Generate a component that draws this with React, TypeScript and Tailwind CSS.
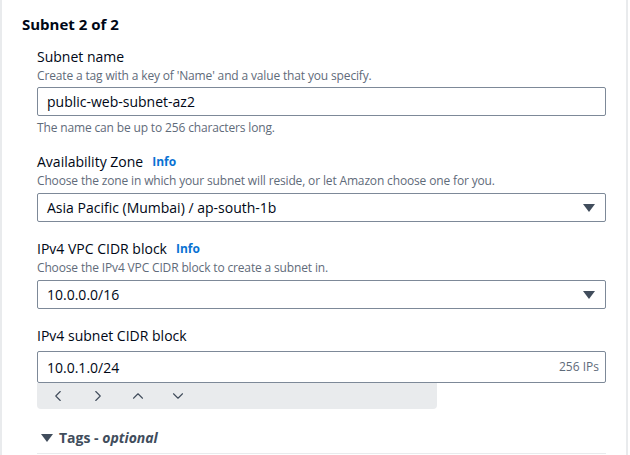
import { ChevronLeft, ChevronRight, ChevronUp, ChevronDown } from 'lucide-react'

const font = { fontFamily: '"Open Sans", "Noto Sans", Arial, sans-serif' }

function Caret() {
  return (
    <svg width="12" height="10" viewBox="0 0 12 10" className="shrink-0">
      <path d="M0 1h12L6 9z" fill="#414d5c" />
    </svg>
  )
}

function Label({ text, info }: { text: string; info?: boolean }) {
  return (
    <div className="flex items-center gap-[9px] text-[14px] leading-[20px] text-[#000716]">
      <span>{text}</span>
      {info && <span className="text-[12px] font-bold text-[#0972d3]">Info</span>}
    </div>
  )
}

function Desc({ text }: { text: string }) {
  return <div className="text-[12px] leading-[18px] tracking-[-0.15px] text-[#5f6b7a]">{text}</div>
}

function Select({ value }: { value: string }) {
  return (
    <div className="mt-[3px] flex h-[29px] items-center justify-between rounded-[2px] border border-[#7d8998] pl-[9px] pr-[10px] text-[14px] text-[#000716]">
      <span>{value}</span>
      <Caret />
    </div>
  )
}

export default function App() {
  return (
    <div style={font} className="h-[455px] w-[630px] overflow-hidden bg-white">
      <div className="h-full border-l-2 border-r-2 border-[#e9ebed] mr-[2px]">
        <div className="pl-[20px] pt-[13px] text-[15px] font-bold leading-[22px] text-[#000716]">Subnet 2 of 2</div>
        <div className="ml-[35px] mr-[20px] mt-[12px]">
          <Label text="Subnet name" />
          <Desc text="Create a tag with a key of 'Name' and a value that you specify." />
          <div className="mt-[2px] flex h-[29px] items-center rounded-[2px] border border-[#7d8998] pl-[9px] text-[14px] text-[#000716]">
            public-web-subnet-az2
          </div>
          <div className="mt-[3px]"><Desc text="The name can be up to 256 characters long." /></div>

          <div className="mt-[15px]">
            <Label text="Availability Zone" info />
            <Desc text="Choose the zone in which your subnet will reside, or let Amazon choose one for you." />
            <Select value="Asia Pacific (Mumbai) / ap-south-1b" />
          </div>

          <div className="mt-[17px]">
            <Label text="IPv4 VPC CIDR block" info />
            <Desc text="Choose the IPv4 VPC CIDR block to create a subnet in." />
            <Select value="10.0.0.0/16" />
          </div>

          <div className="mt-[17px]">
            <Label text="IPv4 subnet CIDR block" />
            <div className="mt-[5px] flex h-[32px] items-center justify-between rounded-[2px] border border-[#7d8998] pl-[9px] pr-[6px] text-[14px] text-[#000716]">
              <span>10.0.1.0/24</span>
              <span className="text-[12px] text-[#5f6b7a]">256 IPs</span>
            </div>
            <div className="flex h-[26px] w-[400px] items-center gap-[22px] rounded-b-[4px] bg-[#e9ebed] pl-[12px] text-[#414d5c]">
              <ChevronLeft size={18} strokeWidth={1.5} />
              <ChevronRight size={18} strokeWidth={1.5} />
              <ChevronUp size={18} strokeWidth={1.5} />
              <ChevronDown size={18} strokeWidth={1.5} />
            </div>
          </div>

          <div className="mt-[18px] flex items-center gap-[6px] pl-[4px] text-[14px] text-[#414d5c]">
            <Caret />
            <span className="font-bold">Tags - <i>optional</i></span>
          </div>
          <div className="mt-[5px] h-px bg-[#e9ebed]" />
        </div>
      </div>
    </div>
  )
}
